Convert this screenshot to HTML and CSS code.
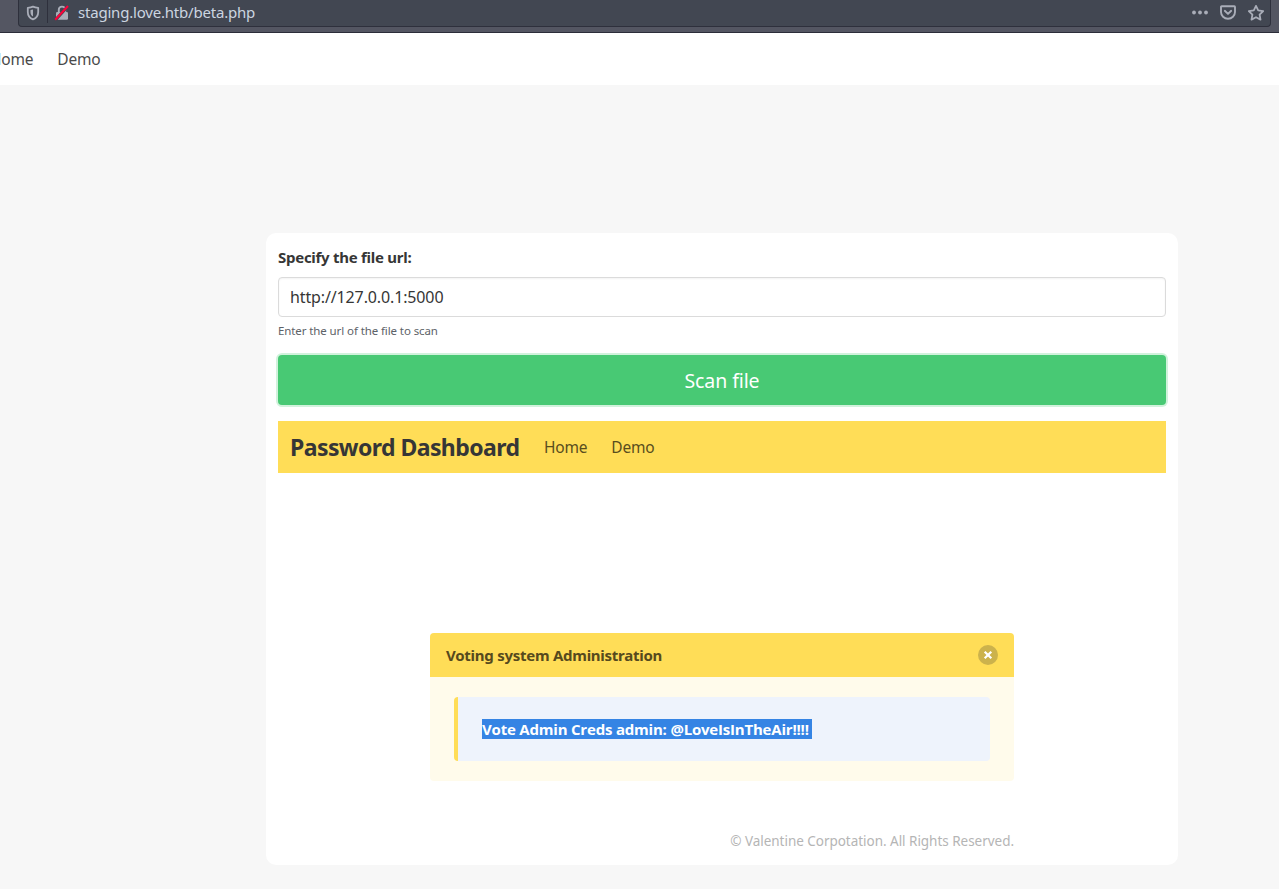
FILE: index.html
```html
<!DOCTYPE html>
<html lang="en">
<head>
<meta charset="utf-8">
<title>staging.love.htb/beta.php</title>
<link rel="stylesheet" href="styles.css">
</head>
<body>
<header class="toolbar">
  <div class="urlbar">
    <svg class="shield" width="16" height="16" viewBox="0 0 16 16"><path d="M8 1.600C6.200 2.500 4.300 2.700 2.800 2.800V7c0 3.700 2 6.200 5.200 7.400C11.200 13.200 13.200 10.700 13.200 7V2.800C11.700 2.700 9.800 2.500 8 1.600z" fill="none" stroke="#a9adb8" stroke-width="1.800" stroke-linejoin="round"/><path d="M8 4.500c-.8.300-1.700.5-2.500.6V7c0 2 .8 3.600 2.500 4.600z" fill="#a9adb8"/></svg>
    <span class="divider"></span>
    <svg class="lock" width="16" height="16" viewBox="0 0 16 16"><path d="M4.800 8V4.800a3.200 3.200 0 0 1 6.400 0V8" fill="none" stroke="#a9adb8" stroke-width="1.900"/><rect x="2" y="7" width="12" height="7.800" rx="1.300" fill="#a9adb8"/><path d="M.8 15.700 13.900 1.200" stroke="#424752" stroke-width="3"/><path d="M1.200 14.800 14 1" stroke="#ff0039" stroke-width="2"/></svg>
    <span class="address">staging.love.htb/beta.php</span>
    <span class="actions">
      <svg width="18" height="16" viewBox="0 0 18 16" fill="#a9adb8"><circle cx="4" cy="7.500" r="1.900"/><circle cx="10" cy="7.500" r="1.900"/><circle cx="16" cy="7.500" r="1.900"/></svg>
      <svg width="16" height="16" viewBox="0 0 16 16" fill="none" stroke="#a9adb8" stroke-width="1.900" stroke-linecap="round" stroke-linejoin="round"><path d="M1.700 1.200h12.600q.7 0 .7.700V7a7 6.700 0 0 1-14 0V1.900q0-.7.700-.7z"/><path d="M4.800 5.800 8 8.900l3.200-3.100"/></svg>
      <svg width="16" height="16" viewBox="0 0 16 16" fill="none" stroke="#a9adb8" stroke-width="1.800" stroke-linejoin="round"><path d="m8 .9 2.200 4.500 5 .7-3.600 3.500.9 5L8 12.200l-4.500 2.400.9-5L.8 6.100l5-.7z"/></svg>
    </span>
  </div>
</header>
<nav class="site-nav"><a class="nav-link">Home</a><a class="nav-link">Demo</a></nav>
<main class="hero">
  <section class="box">
    <label class="label" for="file-url">Specify the file url:</label>
    <input class="input" id="file-url" type="text" value="http://127.0.0.1:5000">
    <p class="help">Enter the url of the file to scan</p>
    <button class="button" type="button">Scan file</button>
    <nav class="dash-nav"><h1 class="brand">Password Dashboard</h1><a class="nav-link">Home</a><a class="nav-link">Demo</a></nav>
    <div class="result">
      <article class="message">
        <div class="message-header"><span>Voting system Administration</span>
          <svg width="20" height="20" viewBox="0 0 20 20"><circle cx="10" cy="10" r="10" fill="#ccb24c"/><path d="m6.700 6.700 6.600 6.600m0-6.600-6.600 6.600" stroke="#fff" stroke-width="2.200"/></svg>
        </div>
        <div class="message-body"><div class="notice"><strong class="selected">Vote Admin Creds admin: @LoveIsInTheAir!!!!</strong></div></div>
      </article>
      <footer class="copyright">© Valentine Corpotation. All Rights Reserved.</footer>
    </div>
  </section>
</main>
</body>
</html>
```
FILE: styles.css
```css
* { box-sizing: border-box; }
body { margin: 0; height: 889px; overflow: hidden; background: #f7f7f7; color: #363636; font: 16px/24px "Noto Sans", sans-serif; }
svg { display: block; flex: none; }
.toolbar { height: 33px; padding: 0 8px 0 18px; background: #545662; border-bottom: 1px solid #2b2d39; }
.urlbar { display: flex; align-items: center; height: 27px; padding: 0 6px; background: #424752; border: 1px solid #2e303c; border-top: 0; border-radius: 0 0 4px 4px; }
.divider { width: 1px; height: 23px; margin: 0 6px 3px 6px; background: #2e303c; }
.address { margin: 0 0 2px 8px; color: #ccd5e0; font-size: 15px; letter-spacing: -.2px; }
.actions { display: flex; gap: 12px; margin-left: auto; }
.site-nav { display: flex; height: 52px; background: #fff; margin-left: -22px; }
.nav-link { padding: 14px 12px; color: #4a4a4a; font-size: 15.5px; letter-spacing: -.2px; }
.hero { padding: 148px 101px 0 266px; }
.box { height: 632px; padding: 12px; background: #fff; border-radius: 10px; }
.label { display: block; font-weight: 700; margin-bottom: 8px; font-size: 15px; letter-spacing: -.27px; }
.input { display: block; width: 100%; height: 40px; padding: 0 11px; border: 1px solid #dbdbdb; border-radius: 4px; background: #fff; color: #363636; font: inherit; letter-spacing: -.13px; box-shadow: inset 0 1px 2px rgba(10,10,10,.05); outline: 0; }
.help { margin: 5px 0 0; font-size: 11.5px; letter-spacing: -.1px; line-height: 18px; color: #5d6268; }
.button { display: block; width: 100%; height: 50px; margin-top: 15px; padding: 2px 0 0; border: 0; border-radius: 4px; background: #48c974; color: #fff; font: 19.500px/30px "Noto Sans", sans-serif; letter-spacing: -.1px; box-shadow: 0 0 0 2px #d1f2dc; }
.dash-nav { display: flex; height: 52px; margin-top: 16px; padding-left: 12px; background: #ffdd57; }
.brand { width: 242px; margin: 0; padding-right: 12px; font-size: 23px; line-height: 52px; font-weight: 700; letter-spacing: -.57px; white-space: nowrap; }
.dash-nav .nav-link { color: #594d1e; }
.result { width: 584px; margin: 160px auto 0; }
.message { border-radius: 4px; overflow: hidden; background: #fffbeb; }
.message-header { display: flex; align-items: center; justify-content: space-between; height: 44px; padding: 0 16px; background: #ffdd57; color: #564a1d; font-weight: 700; font-size: 15px; letter-spacing: -.26px; }
.message-body { padding: 20px 24px; }
.notice { height: 64px; padding: 20px 24px; border-left: 4px solid #ffdd57; border-radius: 4px; background: #eef3fc; }
.selected { display: inline-block; width: 330px; height: 20px; line-height: 20px; background: #3584e4; color: #fff; font-family: "Open Sans", "Noto Sans", sans-serif; font-weight: 700; font-size: 15px; letter-spacing: -.2px; white-space: nowrap; }
.copyright { margin-top: 48px; text-align: right; font-size: 13.5px; letter-spacing: -.03px; line-height: 24px; color: #b5b5b5; }
```
